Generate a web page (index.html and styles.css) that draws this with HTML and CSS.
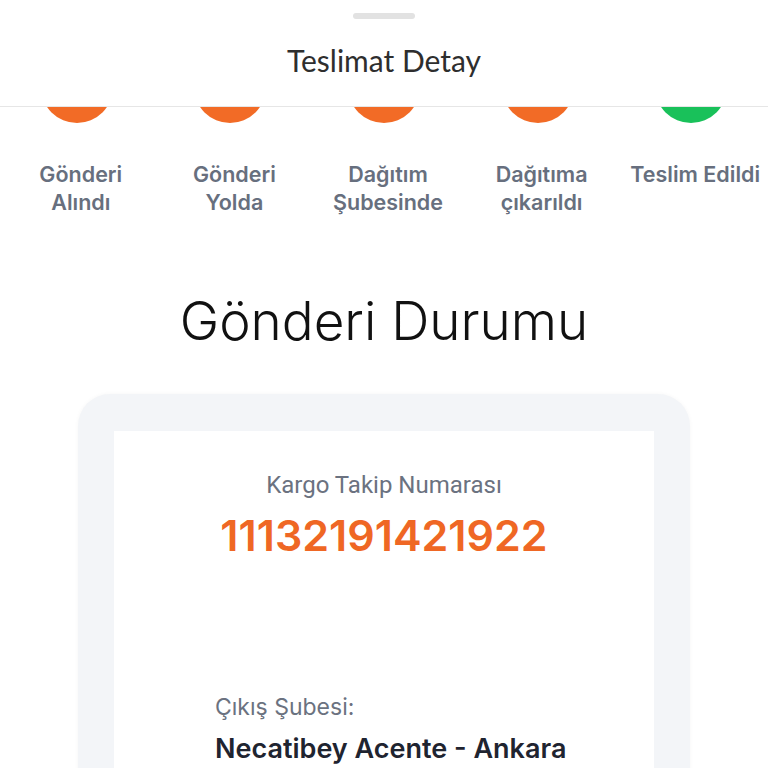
FILE: index.html
```html
<!DOCTYPE html>
<html lang="tr">
<head>
<meta charset="utf-8">
<title>Teslimat Detay</title>
<link rel="stylesheet" href="styles.css">
</head>
<body>
<div class="sheet">
  <header class="header">
    <div class="handle"></div>
    <h1 class="header-title">Teslimat Detay</h1>
  </header>
  <main class="content">
    <div class="steps">
      <div class="step">
        <div class="dot-clip"><span class="dot"></span></div>
        <p class="step-label">Gönderi<br>Alındı</p>
      </div>
      <div class="step">
        <div class="dot-clip"><span class="dot"></span></div>
        <p class="step-label">Gönderi<br>Yolda</p>
      </div>
      <div class="step">
        <div class="dot-clip"><span class="dot"></span></div>
        <p class="step-label">Dağıtım<br>Şubesinde</p>
      </div>
      <div class="step">
        <div class="dot-clip"><span class="dot"></span></div>
        <p class="step-label">Dağıtıma<br>çıkarıldı</p>
      </div>
      <div class="step">
        <div class="dot-clip"><span class="dot dot-done"></span></div>
        <p class="step-label">Teslim Edildi</p>
      </div>
    </div>
    <h2 class="status-title">Gönderi Durumu</h2>
    <section class="card">
      <div class="panel">
        <p class="tracking-label">Kargo Takip Numarası</p>
        <p class="tracking-number">11132191421922</p>
        <div class="info">
          <p class="info-label">Çıkış Şubesi:</p>
          <p class="info-value">Necatibey Acente - Ankara</p>
        </div>
      </div>
    </section>
  </main>
</div>
</body>
</html>
```

FILE: styles.css
```css
* { box-sizing: border-box; }
html, body {
  margin: 0;
  padding: 0;
  background: #ffffff;
  height: 768px;
  overflow: hidden;
}
body {
  font-family: Inter, "Noto Sans", sans-serif;
}
.sheet {
  height: 768px;
  overflow: hidden;
  background: #ffffff;
  display: flex;
  flex-direction: column;
}
.header {
  flex: none;
  height: 107px;
  padding-top: 13px;
  border-bottom: 1px solid #e6e6e6;
  display: flex;
  flex-direction: column;
  align-items: center;
}
.handle {
  width: 62px;
  height: 6px;
  border-radius: 3px;
  background: #e2e2e2;
}
.header-title {
  margin: 23px 0 0;
  font-family: Lato, "Noto Sans", sans-serif;
  font-weight: 400;
  font-size: 30px;
  line-height: 36px;
  color: #2e2e2e;
}
.content {
  flex: 1;
  overflow: hidden;
}
.steps {
  display: grid;
  grid-template-columns: repeat(5, 1fr);
}
.step {
  display: flex;
  flex-direction: column;
  align-items: center;
}
.dot-clip {
  height: 16px;
  width: 100%;
  overflow: hidden;
  display: flex;
  justify-content: center;
  align-items: flex-end;
}
.dot {
  flex: none;
  width: 72px;
  height: 72px;
  border-radius: 50%;
  background: #f26b26;
}
.dot-done {
  background: #19c15a;
}
.step-label {
  margin: 37px 0 0;
  padding-left: 8px;
  text-align: center;
  font-size: 21.5px;
  line-height: 28px;
  font-weight: 600;
  color: #676f7e;
  white-space: nowrap;
}
.status-title {
  margin: 73px 0 0;
  text-align: center;
  font-weight: 300;
  font-size: 53px;
  line-height: 64px;
  color: #111111;
}
.card {
  margin: 41px 78px 0;
  padding: 37px 36px 0;
  background: #f3f5f8;
  border-radius: 32px 32px 0 0;
  box-shadow: 0 0 4px rgba(0, 0, 0, 0.04);
  height: 400px;
}
.panel {
  background: #ffffff;
  height: 100%;
  padding-top: 38px;
}
.tracking-label {
  margin: 0;
  text-align: center;
  font-family: Roboto, "Noto Sans", sans-serif;
  font-size: 24px;
  line-height: 32px;
  color: #6b7280;
}
.tracking-number {
  margin: 9px 0 0;
  text-align: center;
  font-size: 43px;
  line-height: 50px;
  font-weight: 600;
  color: #ef6724;
}
.info {
  margin-top: 131px;
  padding-left: 101px;
}
.info-label {
  margin: 0;
  font-size: 23px;
  line-height: 32px;
  color: #6b7280;
}
.info-value {
  margin: 8px 0 0;
  font-size: 27px;
  line-height: 36px;
  font-weight: 600;
  color: #1f2430;
  white-space: nowrap;
}
```
